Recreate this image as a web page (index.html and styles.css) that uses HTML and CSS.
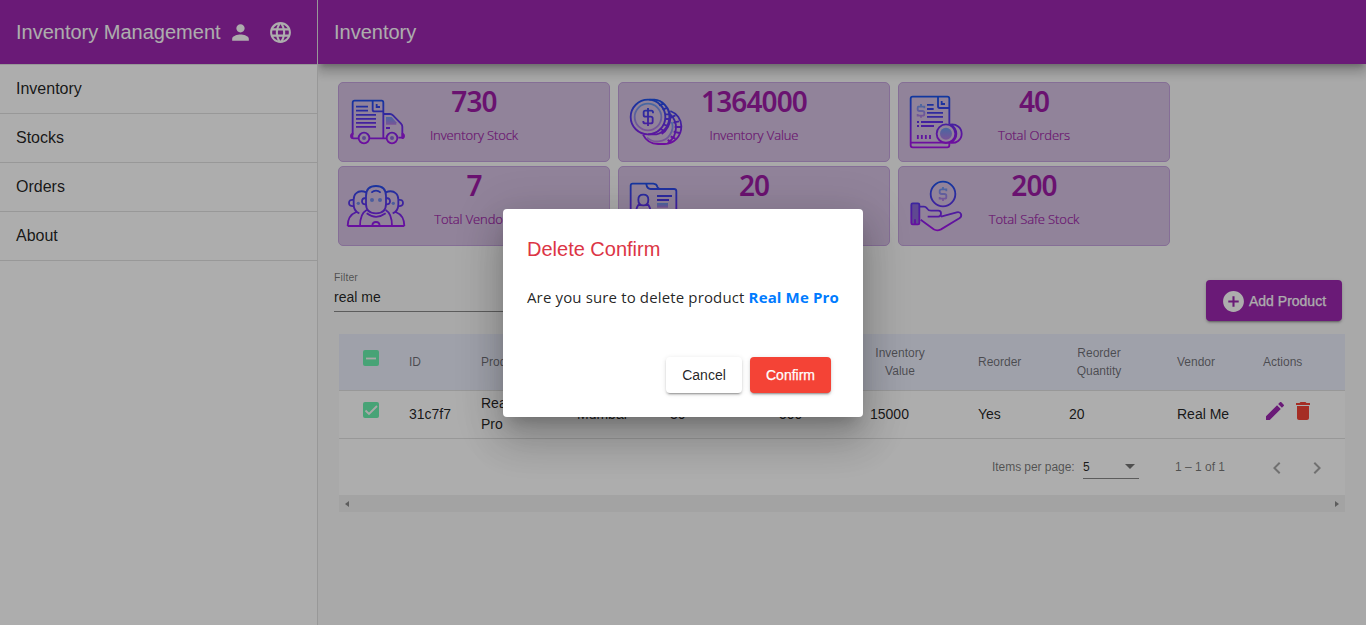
FILE: index.html
```html
<!DOCTYPE html>
<html lang="en">
<head>
<meta charset="utf-8">
<title>Inventory Management</title>
<link rel="stylesheet" href="styles.css">
</head>
<body>
<svg class="defs" aria-hidden="true">
  <defs>
    <linearGradient id="top" gradientUnits="userSpaceOnUse" x1="0" y1="85" x2="0" y2="225"><stop offset="0" stop-color="#1a52ea"/><stop offset="1" stop-color="#a612ea"/></linearGradient>
    <linearGradient id="low" gradientUnits="userSpaceOnUse" x1="0" y1="335" x2="0" y2="480"><stop offset="0" stop-color="#1a52ea"/><stop offset="1" stop-color="#a612ea"/></linearGradient>
    <linearGradient id="soft" x1="0" y1="0" x2="0" y2="1"><stop offset="0" stop-color="#6a9aee"/><stop offset="1" stop-color="#b47ae0"/></linearGradient>
  </defs>
</svg>
<div class="app">
  <aside class="sidenav">
    <header class="toolbar brand">
      <span class="brand-name">Inventory Management</span>
      <svg class="icon25" viewBox="0 0 24 24"><path d="M12 12c2.21 0 4-1.79 4-4s-1.79-4-4-4-4 1.79-4 4 1.790 4 4 4zm0 2c-2.67 0-8 1.340-8 4v2h16v-2c0-2.660-5.330-4-8-4z"/></svg>
      <svg class="icon25 globe" viewBox="0 0 24 24"><path d="M11.990 2C6.470 2 2 6.480 2 12s4.470 10 9.990 10C17.520 22 22 17.520 22 12S17.520 2 11.990 2zm6.930 6h-2.950c-.32-1.250-.78-2.450-1.380-3.560 1.840.63 3.370 1.910 4.330 3.560zM12 4.040c.83 1.200 1.480 2.530 1.910 3.960h-3.820c.43-1.430 1.080-2.760 1.910-3.960zM4.260 14C4.100 13.360 4 12.690 4 12s.1-1.360.26-2h3.380c-.08.66-.14 1.320-.14 2s.06 1.340.14 2H4.260zm.82 2h2.950c.32 1.250.78 2.450 1.380 3.560-1.840-.63-3.370-1.900-4.330-3.560zm2.950-8H5.080c.96-1.660 2.490-2.930 4.330-3.560C8.810 5.550 8.350 6.750 8.030 8zM12 19.960c-.83-1.200-1.480-2.530-1.910-3.960h3.820c-.43 1.430-1.080 2.760-1.910 3.960zM14.340 14H9.660c-.09-.66-.16-1.320-.16-2s.07-1.350.16-2h4.680c.09.65.16 1.320.16 2s-.07 1.340-.16 2zm.25 5.560c.6-1.110 1.060-2.310 1.380-3.560h2.950c-.96 1.650-2.490 2.930-4.330 3.560zM16.360 14c.08-.66.14-1.320.14-2s-.06-1.340-.14-2h3.380c.16.64.26 1.310.26 2s-.1 1.360-.26 2h-3.380z"/></svg>
    </header>
    <nav class="menu">
      <a>Inventory</a><a>Stocks</a><a>Orders</a><a>About</a>
    </nav>
  </aside>
  <main class="main">
    <header class="toolbar page-bar"><span>Inventory</span></header>
    <section class="cards">
      <article class="card">
        <svg class="art" viewBox="48 66 186 180" fill="none" stroke="url(#top)" stroke-width="5.500">
          <path d="M68 194V98q0-6 6-6h81q5 0 5 6v105M128 94v25q0 5 5 5h26M161 132h19q5 0 9 4l24 25q4 4 4 9v33h-12M68 205h17M119 205h49"/>
          <path d="M65 189q-5 3-5 9t5 9h5v-18zM220 189q5 3 5 9t-5 9h-5v-18z" fill="#a01be8" stroke="none"/>
          <path d="M140 102v9h10"/><path d="M78 110h36M78 122h36M78 134.500h60M78 146.500h60M78 158.500h60M78 170.500h60M168 174h12"/>
          <circle cx="102" cy="204" r="16"/><circle cx="186" cy="204" r="16"/>
          <path d="M168 141h17l14 16v7h-31z" fill="url(#soft)" stroke="none"/><circle cx="102" cy="204" r="6" fill="#8b68d8" stroke="none"/><circle cx="186" cy="204" r="6" fill="#8b68d8" stroke="none"/>
        </svg>
        <div class="info"><strong>730</strong><span>Inventory Stock</span></div>
      </article>
      <article class="card">
        <svg class="art" viewBox="48 66 186 180" fill="none" stroke="url(#top)" stroke-width="5.500">
          <circle cx="114" cy="141" r="52"/><circle cx="114" cy="141" r="40" stroke="url(#soft)"/>
          <path d="M114 114v54M129 130v-3q0-5-5-5h-18q-5 0-5 5v8q0 5 5 5h16q6 0 6 5v10q0 5-6 5h-16q-6 0-6-5v-2"/>
          <path d="M118 89h15q18 1 31 15c17 18 19 48 4 69q-11 16-29 20h-25M150 93c20 13 31 32 31 50s-10 40-26 49M147 106l15-5M158 119l15-6M165 133h17M165 147h17M159 163l16 5M149 176l15 7"/>
          <path d="M181 123c20 7 33 25 33 46 0 30-22 53-50 53h-20c-20 0-36-10-45-28M173 219c16-10 25-28 25-47 0-16-7-29-17-39M182 143l14-7M190 158l17-4M194 171h19M191 185l17 4M182 199l14 7M173 209l12 9"/>
          <path d="M111 203q16 14 35 11 24-3 34-20 13-20 5-38" stroke="url(#soft)"/>
        </svg>
        <div class="info"><strong>1364000</strong><span>Inventory Value</span></div>
      </article>
      <article class="card">
        <svg class="art" viewBox="48 66 186 180" fill="none" stroke="url(#top)" stroke-width="5.500">
          <path d="M178 162V86q0-6-6-6H68q-6 0-6 6v140q0 6 6 6h104q6 0 6-6v-8H62M144 82v27q0 5 5 5h27M155 93v9h10"/>
          <path d="M111 104.500h20M111 117h20M111 128.500h48M111 140.500h48M93 156h66M93 168h39M81 156h6M81 168h6"/>
          <path d="M83.500 195v12M95.500 195v12M107.500 195v12M120 195v12"/>
          <path d="M93 102v7M93 136v7M103 115v-5H84q-1 0-1 5v3q0 5 5 5h9q6 0 6 5v4q0 5-5 5H83v-5" stroke="url(#soft)"/>
          <circle cx="168" cy="191" r="28"/><path d="M179 164c20-4 36 9 36 27s-16 31-36 27M184 165q15 10 15 26t-15 26"/><circle cx="168" cy="191" r="18" fill="url(#soft)" stroke="none"/>
        </svg>
        <div class="info"><strong>40</strong><span>Total Orders</span></div>
      </article>
      <article class="card">
        <svg class="art" viewBox="48 318 186 180" fill="none" stroke="url(#low)" stroke-width="5.500">
          <path d="M108 378q0-30 30-30t30 30v24q0 28-30 28t-30-28zM124 368q14-12 28 0M108 384q-12 0-12 10t12 9M168 384q12 0 12 10t-12 9M110 430q28 21 57 0M110 420q-20 11-20 48M167 420q19 11 19 48M53 468h170M127 468q0-12 11-12t11 12"/>
          <path d="M109 367q-19-8-31 3-7 6-7 19v14q0 21 17 27M72 390q-15-3-15 9 0 11 15 9M79 426q-26 10-26 42"/>
          <path d="M167 367q19-8 31 3 7 6 7 19v14q0 21-17 27M204 390q15-3 15 9 0 11-15 9M197 426q26 10 26 42"/>
          <g fill="#7189e8" stroke="none"><circle cx="126" cy="390" r="6"/><circle cx="150" cy="390" r="6"/><circle cx="85" cy="400" r="5"/><circle cx="190" cy="400" r="5"/></g>
        </svg>
        <div class="info"><strong>7</strong><span>Total Vendors</span></div>
      </article>
      <article class="card">
        <svg class="art" viewBox="48 318 186 180" fill="none" stroke="url(#low)" stroke-width="5.500">
          <path d="M62 465V347q0-6 6-6h62q10 1 12 9 2 7 10 7h40q7 0 7 7v101zM109 343q2 13 13 14h30"/>
          <path d="M100 374q15 0 15 15 0 17-15 17t-15-17q0-15 15-15zM89 401q-11 8-11 29h44q0-21-11-29M141 378h45M141 390h36"/><path d="M141 399h33v14h-33z" fill="url(#soft)" stroke="none"/>
        </svg>
        <div class="info"><strong>20</strong><span>Total Products</span></div>
      </article>
      <article class="card">
        <svg class="art" viewBox="48 318 186 180" fill="none" stroke="url(#low)" stroke-width="5.500">
          <circle cx="159" cy="372" r="37"/>
          <path d="M159 351v7M159 386v7M169 364v-6h-14q-6 0-6 5v4q0 5 6 5h8q6 0 6 5v4q0 5-5 5h-15v-5" stroke="url(#soft)"/>
          <rect x="64" y="400" width="24" height="63" rx="4" fill="#8c6cd6"/><path d="M75 448v15"/>
          <path d="M90 410h12q5 0 9 5 4 7 12 7h22q8 0 8 8 0 10-8 10h-32M153 440l47-13c14-3 18 11 8 18l-55 33q-12 6-22 0l-39-29"/>
        </svg>
        <div class="info"><strong>200</strong><span>Total Safe Stock</span></div>
      </article>
    </section>
    <section class="actions-row">
      <label class="filter"><span class="filter-label">Filter</span><span class="filter-value">real me</span></label>
      <button class="add">
        <svg class="icon25" viewBox="0 0 24 24"><path d="M12 2C6.480 2 2 6.480 2 12s4.480 10 10 10 10-4.480 10-10S17.520 2 12 2zm5 11h-4v4h-2v-4H7v-2h4V7h2v4h4v2z"/></svg>
        <span>Add Product</span>
      </button>
    </section>
    <section class="table">
      <div class="row head">
        <div><i class="check"><svg viewBox="0 0 16 16"><path d="M3 8.500h10"/></svg></i></div>
        <div>ID</div><div>Product</div><div>Location</div><div>Stock</div><div>Price</div>
        <div class="two">Inventory<br>Value</div><div>Reorder</div><div class="two">Reorder<br>Quantity</div><div>Vendor</div><div>Actions</div>
      </div>
      <div class="row item">
        <div><i class="check"><svg viewBox="0 0 16 16"><path d="M2.500 8.500l3.500 3.500L14 4"/></svg></i></div>
        <div>31c7f7</div><div class="product">Real Me<br>Pro</div><div>Mumbai</div><div>30</div><div>500</div>
        <div>15000</div><div>Yes</div><div>20</div><div>Real Me</div>
        <div class="tools">
          <svg class="edit" viewBox="0 0 24 24"><path d="M3 17.250V21h3.750L17.810 9.940l-3.750-3.750L3 17.250zM20.710 7.040c.39-.39.39-1.020 0-1.410l-2.340-2.340c-.39-.39-1.020-.39-1.410 0l-1.830 1.830 3.750 3.750 1.830-1.830z"/></svg>
          <svg class="trash" viewBox="0 0 24 24"><path d="M6 19c0 1.100.9 2 2 2h8c1.100 0 2-.9 2-2V7H6v12zM19 4h-3.500l-1-1h-5l-1 1H5v2h14V4z"/></svg>
        </div>
      </div>
      <div class="paginator">
        <span class="per-page">Items per page:</span>
        <span class="select"><span>5</span><i class="caret"></i></span>
        <span class="range">1 – 1 of 1</span>
        <svg class="chev" viewBox="0 0 24 24"><path d="M15.410 7.410L14 6l-6 6 6 6 1.410-1.410L10.830 12z"/></svg>
        <svg class="chev" viewBox="0 0 24 24"><path d="M10 6L8.590 7.410 13.170 12l-4.580 4.590L10 18l6-6z"/></svg>
      </div>
      <div class="scroll"><i class="left"></i><i class="right"></i></div>
    </section>
  </main>
</div>
<div class="backdrop">
  <div class="dialog" role="dialog">
    <h2>Delete Confirm</h2>
    <p>Are you sure to delete product <b>Real Me Pro</b></p>
    <div class="buttons"><button class="cancel">Cancel</button><button class="confirm">Confirm</button></div>
  </div>
</div>
</body>
</html>
```
FILE: styles.css
```css
* { box-sizing: border-box; }
body { margin: 0; height: 625px; overflow: hidden; background: #fafafa; color: rgba(0,0,0,.87); font-family: "Liberation Sans", Arial, sans-serif; }
svg { display: block; flex: none; }
button { border: 0; font: inherit; padding: 0; }
.defs { position: absolute; width: 0; height: 0; }
.app { display: flex; height: 625px; }
.sidenav { width: 318px; background: #fff; border-right: 1px solid #e0e0e0; }
.toolbar { height: 64px; display: flex; align-items: center; padding: 0 16px; background: #9c27b0; color: #fff; font-size: 20px; }
.brand-name { width: 212px; white-space: nowrap; }
.icon25 { width: 25px; height: 25px; fill: currentColor; }
.toolbar .icon25 { margin-top: 1px; }
.globe { margin-left: 15px; }
.menu { border-top: 1px solid #e0e0e0; }
.menu a { display: flex; align-items: center; height: 49px; padding: 0 16px; border-bottom: 1px solid #e0e0e0; font-size: 16px; }
.main { flex: 1; min-width: 0; }
.page-bar { box-shadow: 0 5px 5px -3px rgba(0,0,0,.2), 0 8px 10px 1px rgba(0,0,0,.14), 0 3px 14px 2px rgba(0,0,0,.12); clip-path: inset(0 0 -30px 0); }
.cards { display: grid; grid-template-columns: repeat(3, 272px); grid-auto-rows: 80px; gap: 4px 8px; padding: 18px 0 0 20px; }
.card { display: grid; grid-template-columns: 62px 1fr 62px; padding: 0 7px; border: 1px solid #c5a3de; border-radius: 5px; background: #d6c2e3; }
.art { width: 62px; height: 60px; margin-top: 9px; }
.info { display: flex; flex-direction: column; align-items: center; color: #9c1ba6; font-family: "Noto Sans", "Open Sans", sans-serif; white-space: nowrap; }
.info strong { font-size: 28px; font-weight: 600; line-height: 34px; margin-top: 1px; letter-spacing: -.9px; }
.info span { font-family: "Open Sans", "Noto Sans", sans-serif; font-size: 13px; font-weight: 300; line-height: 20px; margin-top: 7px; letter-spacing: -.1px; -webkit-text-stroke: .2px currentColor; }
.actions-row { display: flex; justify-content: space-between; align-items: flex-start; height: 88px; padding: 24px 24px 0 16px; }
.filter { width: 300px; height: 42px; border-bottom: 1px solid #888; display: flex; flex-direction: column; }
.filter-label { font-size: 10.500px; line-height: 14px; letter-spacing: .1px; color: rgba(0,0,0,.54); }
.filter-value { font-size: 14px; line-height: 16px; margin-top: 5px; }
.add { display: flex; align-items: center; gap: 3px; width: 136px; height: 41px; margin-top: 10px; padding-left: 15px; border-radius: 4px; background: #9c27b0; color: #fff; font-size: 14px; box-shadow: 0 3px 1px -2px rgba(0,0,0,.2), 0 2px 2px rgba(0,0,0,.14), 0 1px 5px rgba(0,0,0,.12); white-space: nowrap; }
.add span, .confirm { -webkit-text-stroke: .25px currentColor; }
.add .icon25 { margin-top: 2px; }
.table { width: 1006px; margin-left: 21px; background: #fff; }
.row { display: grid; grid-template-columns: 46px 72px 96px 93px 109px 91px 108px 91px 108px 86px 1fr; align-items: center; padding-left: 24px; border-bottom: 1px solid #e0e0e0; }
.head { height: 57px; background: #ebedfb; color: rgba(0,0,0,.54); font-size: 12px; line-height: 18px; }
.two { width: 60px; text-align: center; }
.item { height: 48px; font-size: 14px; line-height: 21px; }
.item .product { margin-bottom: 2px; }
.check { display: block; width: 16px; height: 16px; border-radius: 2px; margin-bottom: 8px; background: #69f0ae; }
.item .check { margin-bottom: 10px; }
.check svg { width: 16px; height: 16px; fill: none; stroke: #fafafa; stroke-width: 1.800; }
.tools { display: flex; gap: 4px; margin-bottom: 8px; }
.tools svg { width: 24px; height: 24px; }
.edit { fill: #9c27b0; }
.trash { fill: #f44336; }
.paginator { display: flex; align-items: center; height: 56px; padding-left: 653px; font-size: 12px; color: rgba(0,0,0,.54); white-space: nowrap; }
.per-page { width: 91px; letter-spacing: -.05px; }
.select { display: flex; justify-content: space-between; align-items: center; width: 56px; height: 24px; padding-right: 4px; border-bottom: 1px solid #888; color: rgba(0,0,0,.87); }
.caret { border: 5px solid transparent; border-top-color: #757575; border-bottom: 0; }
.range { width: 90px; margin-left: 36px; }
.chev { width: 24px; height: 24px; margin: 2px 16px 0 0; fill: rgba(0,0,0,.35); }
.scroll { display: flex; justify-content: space-between; align-items: center; height: 17px; padding: 0 6px; background: #f0f0f0; }
.scroll i { border: 3.500px solid transparent; }
.scroll .left { border-left: 0; border-right: 4px solid #8a8a8a; }
.scroll .right { border-right: 0; border-left: 4px solid #8a8a8a; }
.backdrop { position: absolute; inset: 0; display: flex; align-items: center; justify-content: center; background: rgba(0,0,0,.32); }
.dialog { width: 360px; height: 208px; padding: 24px; border-radius: 4px; background: #fff; box-shadow: 0 11px 15px -7px rgba(0,0,0,.2), 0 24px 38px 3px rgba(0,0,0,.14), 0 9px 46px 8px rgba(0,0,0,.12); }
.dialog h2 { margin: 0; color: #dc3545; font-size: 20px; font-weight: 400; line-height: 32px; }
.dialog p { margin: 20px 0 0; font: 15px/24px "Open Sans", "Noto Sans", sans-serif; letter-spacing: .14px; white-space: nowrap; }
.dialog b { color: #007bff; font-weight: 700; }
.buttons { display: flex; gap: 8px; justify-content: flex-end; margin-top: 48px; padding-right: 8px; }
.buttons button { height: 36px; border-radius: 4px; font-size: 14px; background: #fff; color: rgba(0,0,0,.87); box-shadow: 0 3px 1px -2px rgba(0,0,0,.2), 0 2px 2px rgba(0,0,0,.14), 0 1px 5px rgba(0,0,0,.12); }
.buttons .cancel { width: 76px; }
.buttons .confirm { width: 81px; background: #f44336; color: #fff; }
```
